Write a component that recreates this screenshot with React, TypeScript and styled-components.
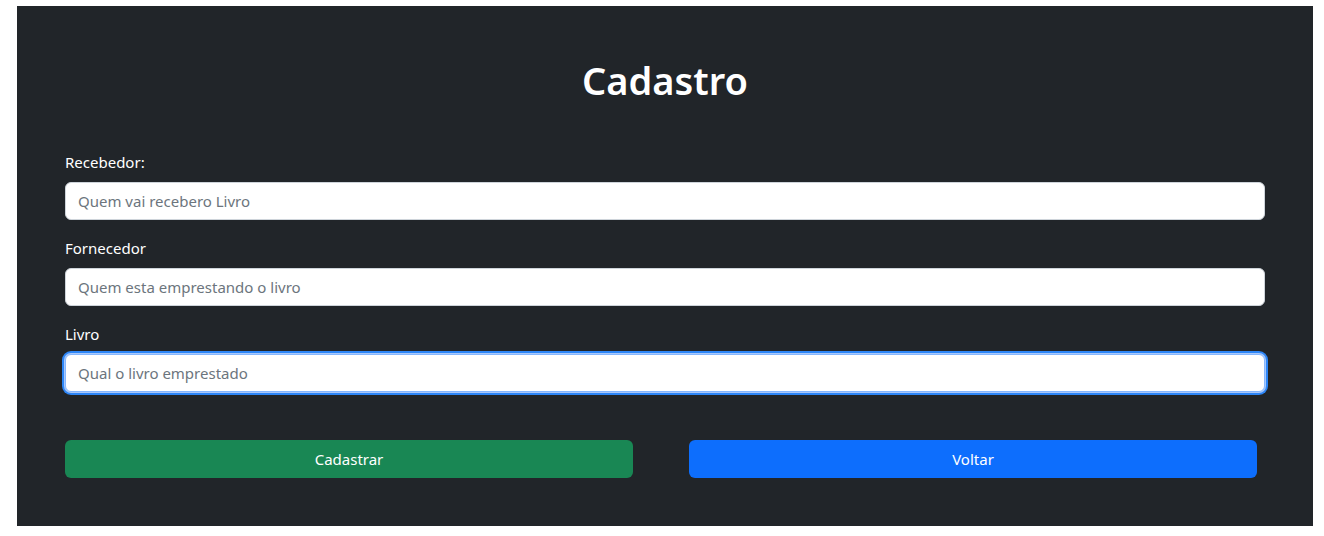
import React from "react";
import styled, { createGlobalStyle, css } from "styled-components";

const GlobalStyle = createGlobalStyle`
  html, body { margin: 0; padding: 0; background: #ffffff; }
  body {
    font-family: "Noto Sans", "Open Sans", "Liberation Sans", sans-serif;
    -webkit-font-smoothing: antialiased;
  }
  * { box-sizing: border-box; }
`;

const Page = styled.div`
  padding: 6px 11px 10px 17px;
`;

const Panel = styled.main`
  background: #212529;
  height: 520px;
  padding: 50px 48px 0 48px;
  display: flex;
  flex-direction: column;
`;

const Title = styled.h1`
  margin: 0 0 46px 0;
  color: #ffffff;
  font-size: 38px;
  line-height: 48px;
  font-weight: 600;
  text-align: center;
`;

const Form = styled.form`
  display: flex;
  flex-direction: column;
`;

const Field = styled.div`
  display: flex;
  flex-direction: column;
  margin-bottom: 16px;
`;

const Label = styled.label`
  color: #ffffff;
  font-size: 15px;
  line-height: 24px;
  margin-bottom: 8px;
`;

const Input = styled.input<{ $focused?: boolean }>`
  width: 100%;
  height: 38px;
  padding: 6px 12px;
  font-family: inherit;
  font-size: 15px;
  color: #212529;
  background: #ffffff;
  border: 1px solid #ced4da;
  border-radius: 6px;
  outline: none;
  &::placeholder { color: #6c757d; }
  ${(p) =>
    p.$focused &&
    css`
      border-color: #86b7fe;
      box-shadow: inset 0 0 0 1px #ffffff, 0 0 0 1px #a8c8fb, 0 0 0 3px #2d86f7;
    `}
`;

const ButtonRow = styled.div`
  display: flex;
  gap: 56px;
  padding-right: 8px;
  margin-top: 32px;
`;

const Button = styled.button<{ $variant: "success" | "primary" }>`
  flex: 1;
  height: 38px;
  border: none;
  border-radius: 6px;
  color: #ffffff;
  font-family: inherit;
  font-size: 15px;
  background: ${(p) => (p.$variant === "success" ? "#198754" : "#0d6efd")};
  cursor: pointer;
`;

export default function App() {
  return (
    <>
      <GlobalStyle />
      <Page>
        <Panel>
          <Title>Cadastro</Title>
          <Form onSubmit={(e) => e.preventDefault()}>
            <Field>
              <Label htmlFor="recebedor">Recebedor:</Label>
              <Input id="recebedor" placeholder="Quem vai recebero Livro" />
            </Field>
            <Field>
              <Label htmlFor="fornecedor">Fornecedor</Label>
              <Input id="fornecedor" placeholder="Quem esta emprestando o livro" />
            </Field>
            <Field>
              <Label htmlFor="livro">Livro</Label>
              <Input id="livro" placeholder="Qual o livro emprestado" $focused />
            </Field>
            <ButtonRow>
              <Button type="submit" $variant="success">Cadastrar</Button>
              <Button type="button" $variant="primary">Voltar</Button>
            </ButtonRow>
          </Form>
        </Panel>
      </Page>
    </>
  );
}
